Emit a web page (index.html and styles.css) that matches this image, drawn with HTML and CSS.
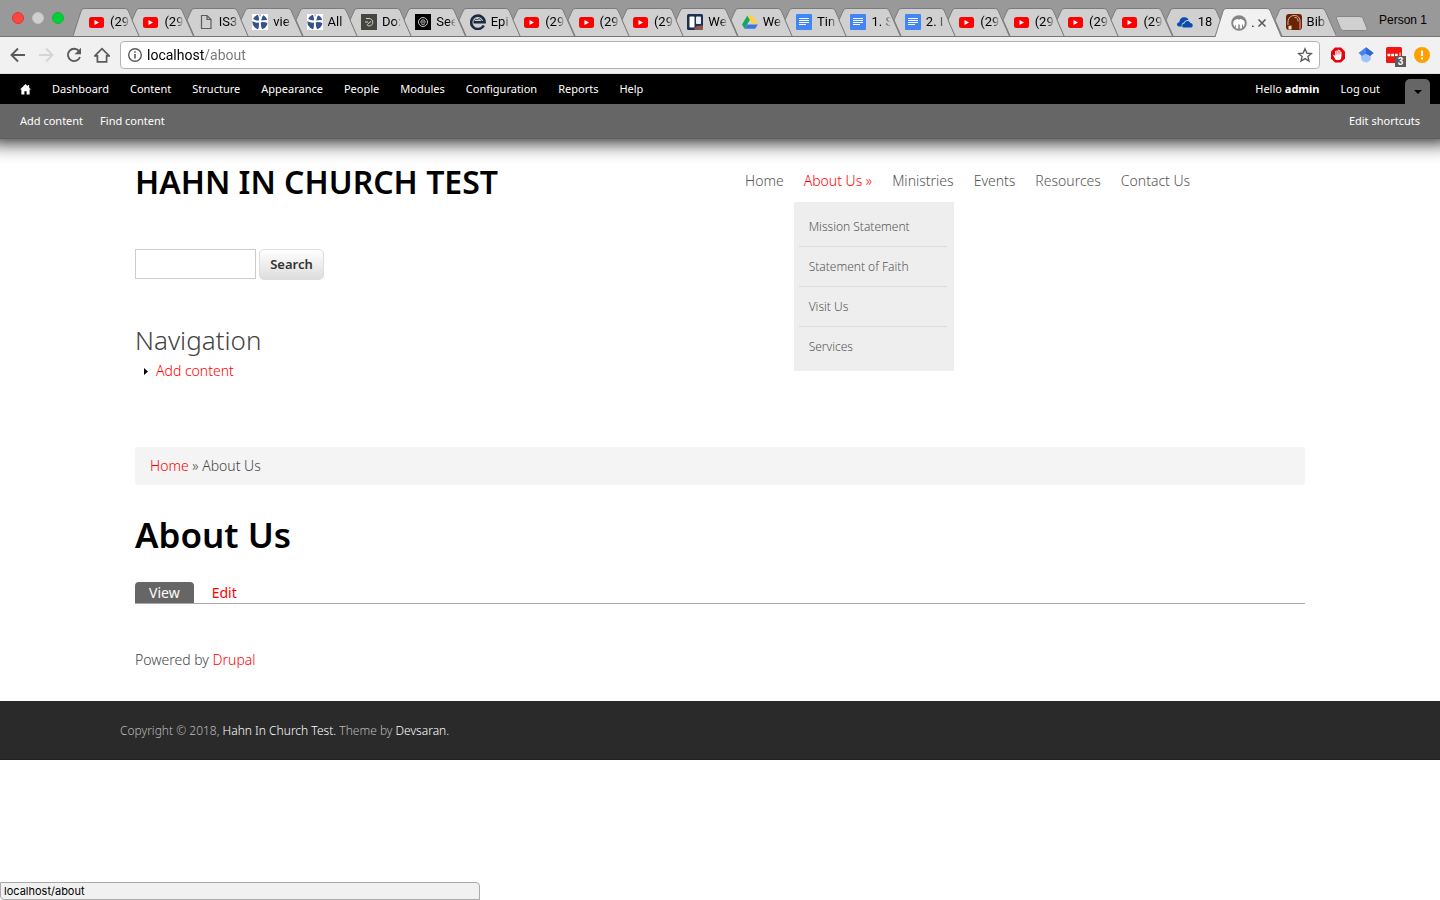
FILE: index.html
```html
<!DOCTYPE html>
<html lang="en">
<head>
<meta charset="utf-8">
<title>About Us | Hahn In Church Test</title>
<link rel="stylesheet" href="styles.css">
</head>
<body>
<svg class="defs" aria-hidden="true">
  <symbol id="shape-first" viewBox="0 0 66 28" preserveAspectRatio="none"><path d="M0 28 L8 3 Q9 .5 11 .5 H52 Q54 .5 55 3 L66 28" vector-effect="non-scaling-stroke"/></symbol>
  <symbol id="shape" viewBox="0 0 66 28" preserveAspectRatio="none"><path d="M12 28 L5 12 L9 3 Q10 .5 12 .5 H52 Q54 .5 55 3 L66 28" vector-effect="non-scaling-stroke"/></symbol>
  <symbol id="yt" viewBox="0 0 16 16"><rect x="0" y="3" width="15" height="11" rx="2.5" fill="#f00"/><path d="M5.5 6v5L10 8.500z" fill="#fff"/></symbol>
  <symbol id="doc" viewBox="0 0 16 16"><path d="M3.500 1.500h5.500l4 4v9h-9.500zM9 1.500v4h4" fill="none" stroke="#5c5c5c" stroke-width="1.200"/></symbol>
  <symbol id="cross" viewBox="0 0 16 16"><rect width="16" height="16" fill="#fff"/><circle cx="8" cy="8" r="7.600" fill="#34528b"/><path d="M5.200 -.2Q7.600 3 6.800 6.600 3.600 6.600 0 4.300V7Q4 9.200 6.800 8.600 7.400 12 6 16H10.500Q8.400 12 8.900 8.300 12 7.500 16 9.300V6Q12 5.800 9.200 6.500 9.300 3.500 12 .3L8.800 0Q8.300 1.800 8 2.800 7.700 1 7.300 -.2z" fill="#fff"/></symbol>
  <symbol id="gdoc" viewBox="0 0 16 16"><rect width="16" height="16" rx="1" fill="#4285f4"/><path d="M3 4.500h10M3 6.500h10M3 8.500h10M3 10.500h7" stroke="#fff"/></symbol>
</svg>

<header class="browser">
  <div class="strip">
    <div class="lights">
      <button class="light red" aria-label="Close window"></button>
      <button class="light grey" aria-label="Minimise window"></button>
      <button class="light green" aria-label="Zoom window"></button>
    </div>
    <nav class="tabs" aria-label="Open tabs">
      <a class="tab" href="#"><svg class="shape"><use href="#shape-first"/></svg><svg class="fav"><use href="#yt"/></svg><span class="label">(29</span></a>
      <a class="tab" href="#"><svg class="shape"><use href="#shape"/></svg><svg class="fav"><use href="#yt"/></svg><span class="label">(29</span></a>
      <a class="tab" href="#"><svg class="shape"><use href="#shape"/></svg><svg class="fav"><use href="#doc"/></svg><span class="label">IS3</span></a>
      <a class="tab" href="#"><svg class="shape"><use href="#shape"/></svg><svg class="fav"><use href="#cross"/></svg><span class="label">vie</span></a>
      <a class="tab" href="#"><svg class="shape"><use href="#shape"/></svg><svg class="fav"><use href="#cross"/></svg><span class="label">All</span></a>
      <a class="tab" href="#"><svg class="shape"><use href="#shape"/></svg><svg class="fav" viewBox="0 0 16 16"><rect width="16" height="16" fill="#45463f"/><path d="M5 4.500h3c5 0 5 7.500 0 7.500-1.800 0-2.300-1.300-1-2.300l3-2.200M4 8h3" fill="none" stroke="#d6d2c0"/></svg><span class="label">Do:</span></a>
      <a class="tab" href="#"><svg class="shape"><use href="#shape"/></svg><svg class="fav" viewBox="0 0 16 16"><rect width="16" height="16" fill="#000"/><circle cx="8" cy="8" r="4.500" fill="none" stroke="#ddd" stroke-width=".9"/><path d="M10 6.500q-2-1.500-4 0M5 8h6M6 9.700q2 1.500 4 0" fill="none" stroke="#ddd" stroke-width=".9"/></svg><span class="label">See</span></a>
      <a class="tab" href="#"><svg class="shape"><use href="#shape"/></svg><svg class="fav" viewBox="0 0 16 16"><path d="M13.800 11.500A6.700 6.700 0 1 1 14.600 8.300H3.500" fill="none" stroke="#1b2b42" stroke-width="2.600"/><path d="M4 6.800c2-3 3-.5 4.300-1.700 1.500-1 2 .7 3.400 1.500" fill="none" stroke="#1b2b42"/></svg><span class="label">Epi</span></a>
      <a class="tab" href="#"><svg class="shape"><use href="#shape"/></svg><svg class="fav"><use href="#yt"/></svg><span class="label">(29</span></a>
      <a class="tab" href="#"><svg class="shape"><use href="#shape"/></svg><svg class="fav"><use href="#yt"/></svg><span class="label">(29</span></a>
      <a class="tab" href="#"><svg class="shape"><use href="#shape"/></svg><svg class="fav"><use href="#yt"/></svg><span class="label">(29</span></a>
      <a class="tab" href="#"><svg class="shape"><use href="#shape"/></svg><svg class="fav" viewBox="0 0 16 16"><rect width="16" height="16" rx="1.500" fill="#1e2f52"/><rect x="2.500" y="2.500" width="5" height="11" rx=".8" fill="#fff"/><rect x="9" y="2.500" width="5" height="7.500" rx=".8" fill="#e9edf3"/><path d="M7 14l3-2 6-.5V15l-1 1H8z" fill="#8c5848"/></svg><span class="label">We</span></a>
      <a class="tab" href="#"><svg class="shape"><use href="#shape"/></svg><svg class="fav" viewBox="0 0 16 16"><path d="M5.300 1.500L0 10.500l2.600 4.300L8 5.800z" fill="#11a861"/><path d="M5.300 1.500h5.200l5.300 9h-5.200z" fill="#ffcf48"/><path d="M5.300 10.500h10.500l-2.600 4.300H2.600z" fill="#3777e3"/></svg><span class="label">We</span></a>
      <a class="tab" href="#"><svg class="shape"><use href="#shape"/></svg><svg class="fav"><use href="#gdoc"/></svg><span class="label">Tin</span></a>
      <a class="tab" href="#"><svg class="shape"><use href="#shape"/></svg><svg class="fav"><use href="#gdoc"/></svg><span class="label">1. S</span></a>
      <a class="tab" href="#"><svg class="shape"><use href="#shape"/></svg><svg class="fav"><use href="#gdoc"/></svg><span class="label">2. I</span></a>
      <a class="tab" href="#"><svg class="shape"><use href="#shape"/></svg><svg class="fav"><use href="#yt"/></svg><span class="label">(29</span></a>
      <a class="tab" href="#"><svg class="shape"><use href="#shape"/></svg><svg class="fav"><use href="#yt"/></svg><span class="label">(29</span></a>
      <a class="tab" href="#"><svg class="shape"><use href="#shape"/></svg><svg class="fav"><use href="#yt"/></svg><span class="label">(29</span></a>
      <a class="tab" href="#"><svg class="shape"><use href="#shape"/></svg><svg class="fav"><use href="#yt"/></svg><span class="label">(29</span></a>
      <a class="tab" href="#"><svg class="shape"><use href="#shape"/></svg><svg class="fav" viewBox="0 0 16 16"><path d="M2 12.500C-1 12-.3 8.500 2.300 8.300 2.500 5 5 3 7.500 3.300 9.500 3.200 11 4.500 11.500 6c-2.500-.3-4 1-4.500 2.500-2 .2-2.700 2-2.200 4z" fill="#0a4bb0"/><path d="M6 13.500c-1.500-1.500-.8-3.800 1.500-4C8 6.500 12 6 13.300 9c3 .2 3.200 4 .7 4.500z" fill="#0a4bb0"/></svg><span class="label">18</span></a>
      <a class="tab active" href="#"><svg class="shape"><use href="#shape-first"/></svg><svg class="fav" viewBox="0 0 16 16"><circle cx="8" cy="8" r="7.800" fill="#858585"/><path d="M2.200 8.500Q2.200 5 5 4.500 6.500 3.500 8 4.800 9.500 3.500 11 4.500 13.800 5 13.800 8.500 13.500 11 12 12V9.500H11V13.500H8.800V9.500H7.300V13.500H4.800V10H4V12Q2.200 10.500 2.200 8.500z" fill="#fff"/></svg><span class="label tiny">.</span><svg class="x" viewBox="0 0 10 10"><path d="M1.500 1.500l7 7M8.500 1.500l-7 7" stroke="#5a5a5a" stroke-width="1.600"/></svg></a>
      <a class="tab" href="#"><svg class="shape"><use href="#shape"/></svg><svg class="fav" viewBox="0 0 16 16"><rect width="16" height="16" rx="3" fill="#6b2304"/><path d="M2 11C1.500 4 4 2 8 1.500c4 0 6 2 6 6V15M8.500 3.500c3 0 3.500 1.500 3.500 4" fill="none" stroke="#efdccc" stroke-width=".8"/><path d="M2.500 12l3-.5v4h-3z" fill="#efdccc"/></svg><span class="label">Bib</span></a>
    </nav>
    <button class="newtab" aria-label="New tab"><svg viewBox="0 0 34 17"><path d="M3 1.500h22q2 0 3 2l4 10q.5 2-1.500 2h-22q-2 0-3-2l-4-10q-.5-2 1.500-2z" fill="#d0d0d0" stroke="#858585"/></svg></button>
    <button class="person">Person 1</button>
  </div>

  <div class="toolbar">
    <button class="tool" aria-label="Back"><svg viewBox="0 0 16 16"><path d="M15 8H2M8 1.500L1.500 8 8 14.500" fill="none" stroke="#5a5a5a" stroke-width="1.900"/></svg></button>
    <button class="tool" aria-label="Forward"><svg viewBox="0 0 16 16"><path d="M1 8h13M8 1.500L14.500 8 8 14.500" fill="none" stroke="#d5d5d5" stroke-width="1.900"/></svg></button>
    <button class="tool" aria-label="Reload"><svg viewBox="0 0 16 16"><path d="M13 4A6.200 6.200 0 1 0 14 10" fill="none" stroke="#5a5a5a" stroke-width="1.900"/><path d="M15 .8v6.400H8.600z" fill="#5a5a5a"/></svg></button>
    <button class="tool" aria-label="Home"><svg viewBox="0 0 16 16"><path d="M.8 8.800L8 1.600l7.200 7.200H12.600v6H3.400v-6z" fill="none" stroke="#5a5a5a" stroke-width="1.700"/></svg></button>
    <div class="omnibox">
      <svg viewBox="0 0 16 16"><circle cx="8" cy="8" r="6.300" fill="none" stroke="#5a5a5a" stroke-width="1.400"/><path d="M8 7v4.500M8 4.300v1.500" stroke="#5a5a5a" stroke-width="1.600"/></svg>
      <input class="url" type="text" aria-label="Address" value="localhost/about">
      <button class="star" aria-label="Bookmark"><svg viewBox="0 0 16 16"><path d="M8 1.800l1.800 4.300 4.700.4-3.600 3 1.100 4.600-4-2.500-4 2.500 1.100-4.600-3.600-3 4.700-.4z" fill="none" stroke="#5a5a5a" stroke-width="1.300"/></svg></button>
    </div>
    <div class="exts">
      <button class="ext" aria-label="Ad blocker"><svg viewBox="0 0 16 16"><path d="M5 .5h6l4 4v7l-4 4H5l-4-4v-7z" fill="#e8000b"/><path d="M5.200 4v5L4 8q-1-.5-.8.5L5.800 13h4q1.700-1 1.700-4V5q-.6-.8-1.100 0V3.500q-.7-.8-1.300 0V3q-.7-.8-1.300 0v.8q-.8-.8-1.300 0z" fill="#fff"/><path d="M6.700 4v3.500M8.200 3.500v4M9.800 4v3.500" stroke="#e8000b" stroke-width=".5"/></svg></button>
      <button class="ext" aria-label="Scholar"><svg viewBox="0 0 16 16"><circle cx="8" cy="10.500" r="5" fill="#a0c3ff"/><path d="M8 .3L.5 6 4 9q4-4 8 0l3.500-3z" fill="#4285f4"/><path d="M8 .3L15.500 6 12 9Q10 7 8 7z" fill="#3367d6"/></svg></button>
      <button class="ext" aria-label="Passwords"><svg viewBox="0 0 16 16"><rect width="16" height="16" rx="1.500" fill="#f0150f"/><path d="M1.500 8h10.500" stroke="#fff" stroke-width="2.500" stroke-dasharray="2.800 .9"/><path d="M14 5.500v5" stroke="#fff"/></svg><span class="count">3</span></button>
      <button class="ext" aria-label="Update available"><svg viewBox="0 0 16 16"><circle cx="8" cy="8" r="8" fill="#ffa000"/><path d="M8 3.500v5.500M8 10.500v2" stroke="#fff" stroke-width="2"/></svg></button>
    </div>
  </div>
</header>

<div class="admin">
  <nav class="admin-menu" aria-label="Administration">
    <a class="home" href="#" aria-label="Home"><svg viewBox="0 0 12 12"><path d="M6 .5L0 6.500h1.500V12h3.300V8.500h2.400V12h3.300V6.500H12L10 4.500V1.500H8.500V3z" fill="#fff"/></svg></a>
    <a href="#">Dashboard</a><a href="#">Content</a><a href="#">Structure</a><a href="#">Appearance</a><a href="#">People</a><a href="#">Modules</a><a href="#">Configuration</a><a href="#">Reports</a><a href="#">Help</a>
    <a class="user" href="#">Hello <b>admin</b></a><a href="#">Log out</a>
    <button class="drawer" aria-label="Hide shortcuts"><svg viewBox="0 0 8 4"><path d="M0 0h8L4 4z" fill="#000"/></svg></button>
  </nav>
  <div class="shortcuts">
    <a href="#">Add content</a><a href="#">Find content</a><a class="edit" href="#">Edit shortcuts</a>
  </div>
</div>

<main class="page">
  <div class="masthead">
    <a class="site-name" href="#">HAHN IN CHURCH TEST</a>
    <ul class="main-menu">
      <li><a href="#">Home</a></li>
      <li class="open"><a href="#">About Us »</a>
        <ul class="submenu">
          <li><a href="#">Mission Statement</a></li>
          <li><a href="#">Statement of Faith</a></li>
          <li><a href="#">Visit Us</a></li>
          <li><a href="#">Services</a></li>
        </ul>
      </li>
      <li><a href="#">Ministries</a></li>
      <li><a href="#">Events</a></li>
      <li><a href="#">Resources</a></li>
      <li><a href="#">Contact Us</a></li>
    </ul>
  </div>

  <form class="search">
    <input class="search-box" type="text" aria-label="Search">
    <button class="search-button" type="button">Search</button>
  </form>

  <section class="navigation">
    <h2>Navigation</h2>
    <ul><li><svg viewBox="0 0 4 7"><path d="M0 0l4 3.500L0 7z"/></svg><a href="#">Add content</a></li></ul>
  </section>

  <div class="breadcrumb"><a href="#">Home</a> » About Us</div>
  <h1>About Us</h1>
  <div class="view-tabs"><a class="current" href="#">View</a><a href="#">Edit</a></div>
  <p class="powered">Powered by <a href="#">Drupal</a></p>
</main>

<footer class="footer"><p>Copyright © 2018, <a href="#">Hahn In Church Test.</a> Theme by <a href="#">Devsaran.</a></p></footer>
<div class="status">localhost/about</div>
</body>
</html>
```
FILE: styles.css
```css
* { box-sizing: border-box; }
body { margin: 0; background: #fff; color: #444; font: 300 14px/20px "Noto Sans", sans-serif; }
a { color: #f00; text-decoration: none; }
button { border: 0; padding: 0; background: none; font: inherit; color: inherit; }
ul { list-style: none; margin: 0; padding: 0; }
svg { display: block; flex: none; }
.defs { position: absolute; width: 0; height: 0; }

.browser { position: relative; z-index: 1; font-family: Roboto, sans-serif; font-weight: 400; color: #000; }
.strip { display: flex; align-items: flex-end; height: 37px; background: #999; border-bottom: 1px solid #757575; }
.lights { display: flex; gap: 8px; align-self: center; width: 73px; padding-left: 12px; flex: none; }
.light { width: 12px; height: 12px; border-radius: 50%; }
.red { background: #fc4642; border: 1px solid #df3733; }
.grey { background: #d0d0d0; border: 1px solid #c2c2c2; }
.green { background: #00cf3b; border: 1px solid #0dbb35; }
.tabs { display: flex; flex: 1; min-width: 0; }
.tab { position: relative; display: flex; align-items: center; flex: 1 1 0; min-width: 0; height: 28px; margin-right: -12px; padding-left: 16px; color: #000; font-size: 13px; }
.tab:last-child { margin-right: 0; }
.shape { position: absolute; inset: 0; width: 100%; height: 100%; fill: #d0d0d0; stroke: #7b7b7b; }
.active { z-index: 1; height: 29px; margin-bottom: -1px; }
.active .shape { fill: #f1f1f1; }
.fav { position: relative; width: 16px; height: 16px; }
.label { position: relative; width: 20px; margin-left: 5px; overflow: hidden; white-space: nowrap; mask-image: linear-gradient(to right, #000 60%, transparent); }
.tiny { width: 6px; margin-left: 4px; }
.x { position: relative; width: 10px; height: 10px; }
.newtab { width: 34px; height: 17px; align-self: center; margin: 10px 10px 0 -1px; }
.person { width: 61px; padding-bottom: 6px; font: 12px/20px "Liberation Sans", sans-serif; text-align: left; }
.toolbar { display: flex; align-items: center; height: 37px; padding: 0 10px; background: #f1f1f1; border-bottom: 1px solid #ddd; }
.tool { width: 16px; height: 16px; margin-right: 12px; }
.tool:nth-child(4) { margin-right: 10px; }
.omnibox { display: flex; align-items: center; flex: 1; height: 28px; padding: 0 6px; background: #fff; border: 1px solid #b3b3b3; border-radius: 4px; }
.omnibox svg { width: 16px; height: 16px; }
.url { flex: 1; min-width: 0; margin-left: 4px; padding: 0; border: 0; font: 14px/20px Roboto, sans-serif; color: transparent; background: linear-gradient(to right, #000 57px, #777 57px); background-clip: text; }
.exts { display: flex; gap: 12px; margin-left: 10px; }
.ext { position: relative; width: 16px; height: 16px; }
.count { position: absolute; left: 9px; top: 9px; width: 11px; height: 11px; background: #5b5b5b; color: #fff; font: bold 10px/11px "Liberation Sans", sans-serif; }

.admin { position: relative; font-size: 11px; font-weight: 400; box-shadow: 0 -9px 18px 12px rgba(0, 0, 0, .9); }
.admin a { color: #fff; }
.admin-menu { display: flex; align-items: center; gap: 1px; height: 30px; padding: 0 10px; background: #000; }
.admin-menu a { padding: 0 10px; white-space: nowrap; }
.home svg { width: 11px; height: 12px; }
.admin-menu .user { margin-left: auto; }
.drawer { display: flex; align-items: center; justify-content: center; align-self: flex-end; width: 25px; height: 25px; margin-left: 14px; background: #666; border-radius: 5px 5px 0 0; }
.drawer svg { width: 8px; height: 4px; }
.shortcuts { display: flex; gap: 17px; height: 35px; padding: 7px 20px; background: #666; border-bottom: 1px solid #5e5e5e; }
.edit { margin-left: auto; }

.page { max-width: 1170px; margin: 0 auto; padding-top: 20px; }
.masthead { display: grid; grid-template-columns: 1fr 1fr; column-gap: 30px; }
.site-name { color: #000; font-size: 32px; line-height: 46px; font-weight: 600; white-space: nowrap; }
.main-menu { display: flex; }
.main-menu > li { position: relative; }
.main-menu > li > a { display: block; padding: 12px 10px; color: #555; white-space: nowrap; }
.main-menu > .open > a { color: #f00; }
.submenu { position: absolute; left: 0; top: 43px; width: 160px; padding: 5px 7px 5px 5px; background: #eee; }
.submenu li + li { border-top: 1px solid #dcdcdc; }
.submenu a { display: block; padding: 10px; font-size: 12px; line-height: 19px; color: #555; }
.search { display: flex; gap: 3px; margin-top: 44px; }
.search-box { width: 121px; height: 30px; border: 1px solid #ccc; }
.search-button { width: 65px; height: 31px; padding-bottom: 2px; border: 1px solid #ddd; border-radius: 5px; background: linear-gradient(#fff, #ddd); color: #333; font-size: 13px; font-weight: 600; }
.navigation { margin-top: 41px; }
h2 { margin: 0 0 2px; font-size: 26px; line-height: 38px; font-weight: 300; }
.navigation li { display: flex; align-items: center; gap: 8px; padding-left: 9px; }
.navigation svg { width: 4px; height: 7px; }
.breadcrumb { margin-top: 66px; padding: 9px 15px; background: #f4f4f4; border-radius: 3px; }
h1 { margin: 26px 0 23px; color: #000; font-size: 35px; line-height: 48px; font-weight: 600; }
.view-tabs { display: flex; border-bottom: 1px solid #aaa; font-weight: 400; }
.view-tabs a { padding: 1px 14px 0; margin-right: 4px; border-radius: 4px 4px 0 0; line-height: 20px; }
.view-tabs .current { background: #666; color: #fff; }
.powered { margin: 46px 0 31px; }
.footer { background: #2a2a2a; border-bottom: 1px solid #231f20; color: #bbb; font-size: 12px; }
.footer p { max-width: 1200px; margin: 0 auto; padding: 20px 0 18px; }
.footer a { color: #fff; }
.status { position: fixed; left: 0; bottom: 0; width: 480px; height: 18px; padding: 0 3px; background: #f1f1f1; border: 1px solid #aaa; border-radius: 0 4px 0 4px; color: #000; font: 11px/16px Inter, sans-serif; }
```
